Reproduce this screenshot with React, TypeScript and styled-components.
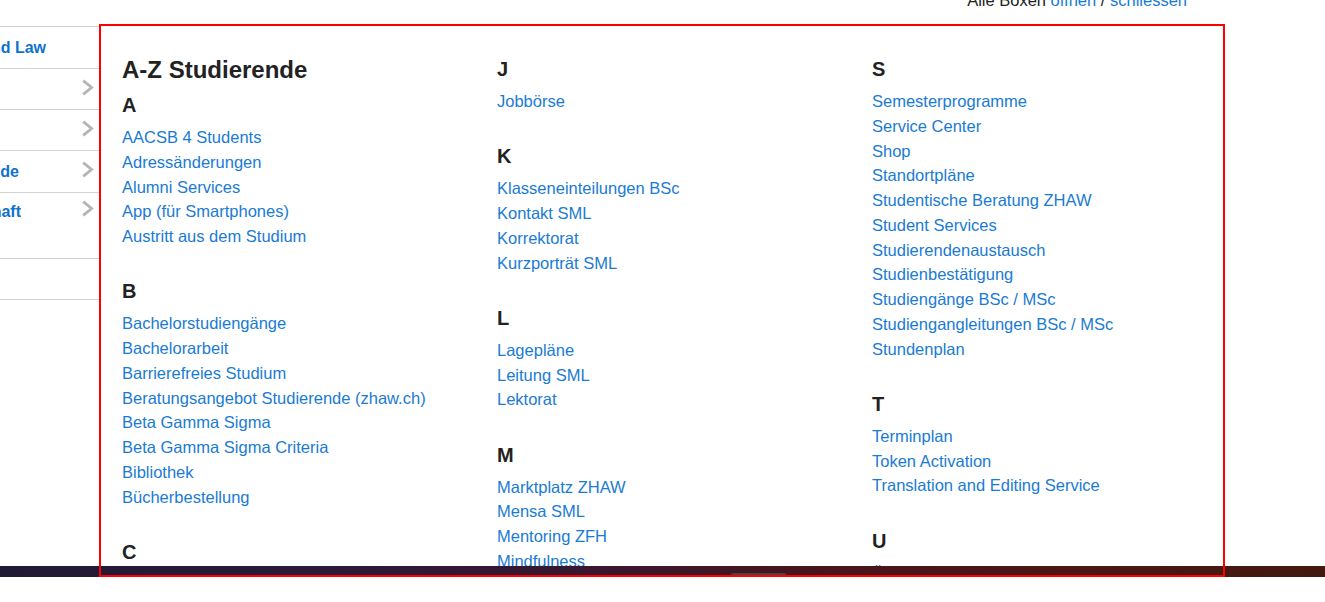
import React from "react";
import styled, { createGlobalStyle } from "styled-components";

const GlobalStyle = createGlobalStyle`
  html, body { margin: 0; padding: 0; background: #ffffff; }
  body { font-family: "Liberation Sans", Arial, sans-serif; overflow: hidden; }
  * { box-sizing: border-box; }
`;

const LINK = "#1a7bd4";
const INK = "#222222";
const RULE = "#d3d3d3";

const Root = styled.div`
  position: relative;
  width: 1325px;
  height: 602px;
  overflow: hidden;
  background: #ffffff;
`;

const Viewport = styled.div`
  height: 566px;
  overflow: hidden;
`;

const TopBar = styled.div`
  margin-top: -12px;
  height: 38px;
  display: flex;
  justify-content: flex-end;
  padding-right: 138px;
  font-size: 16.5px;
  line-height: 24.8px;
  color: ${INK};
  white-space: pre;
`;

const TopLink = styled.a`
  color: ${LINK};
  text-decoration: none;
`;

const Main = styled.div`
  display: flex;
  align-items: flex-start;
`;

const Sidebar = styled.nav`
  width: 100px;
  flex: none;
  border-top: 1px solid ${RULE};
  overflow: hidden;
`;

const SideItem = styled.div<{ $h: number; $tall?: boolean }>`
  height: ${(p) => p.$h}px;
  border-bottom: 1px solid ${RULE};
  display: flex;
  align-items: ${(p) => (p.$tall ? "flex-start" : "center")};
  padding-top: ${(p) => (p.$tall ? 9 : 0)}px;
  padding-right: 6px;
`;

const SideLabel = styled.span<{ $end: number }>`
  width: ${(p) => p.$end}px;
  display: flex;
  justify-content: flex-end;
  overflow: hidden;
  white-space: nowrap;
  font-size: 16px;
  line-height: 20px;
  font-weight: 700;
  color: #0f72cc;
`;

const Chevron = styled.svg<{ $tall?: boolean }>`
  margin-left: auto;
  margin-top: ${(p) => (p.$tall ? -2 : 0)}px;
  margin-bottom: ${(p) => (p.$tall ? 0 : 4)}px;
  flex: none;
  display: block;
`;

const Content = styled.section`
  flex: 1;
  padding: 31px 0 0 22px;
  display: grid;
  grid-template-columns: repeat(3, 375px);
  align-items: start;
`;

const Column = styled.div<{ $offset?: number }>`
  padding-top: ${(p) => p.$offset ?? 0}px;
`;

const Title = styled.h2`
  margin: 0 0 11px;
  font-size: 24px;
  line-height: 26px;
  font-weight: 700;
  color: ${INK};
  white-space: nowrap;
`;

const Group = styled.div`
  & + & {
    margin-top: 31.5px;
  }
`;

const Letter = styled.h3`
  margin: 0 0 9px;
  font-size: 20px;
  line-height: 22px;
  font-weight: 700;
  color: ${INK};
`;

const LinkList = styled.ul`
  list-style: none;
  margin: 0;
  padding: 0;
`;

const Item = styled.li`
  font-size: 16.5px;
  line-height: 24.75px;
`;

const ItemLink = styled.a`
  color: ${LINK};
  text-decoration: none;
  white-space: nowrap;
`;

const Band = styled.div`
  height: 11px;
  background: linear-gradient(
    90deg,
    #211a35 0%,
    #2a1a3a 25%,
    #39172f 45%,
    #47151c 62%,
    #4a1716 80%,
    #42190f 100%
  );
  display: flex;
  align-items: flex-end;
  padding-left: 730px;
`;

const BandTab = styled.div`
  width: 57px;
  height: 4px;
  border-radius: 4px 4px 0 0;
  background: #4b4248;
`;

const Highlight = styled.div`
  position: absolute;
  left: 99px;
  top: 24px;
  width: 1126px;
  height: 553px;
  border: 2px solid #ff0000;
  pointer-events: none;
`;

type Section = { letter: string; items: string[] };

const col1: Section[] = [
  {
    letter: "A",
    items: [
      "AACSB 4 Students",
      "Adressänderungen",
      "Alumni Services",
      "App (für Smartphones)",
      "Austritt aus dem Studium",
    ],
  },
  {
    letter: "B",
    items: [
      "Bachelorstudiengänge",
      "Bachelorarbeit",
      "Barrierefreies Studium",
      "Beratungsangebot Studierende (zhaw.ch)",
      "Beta Gamma Sigma",
      "Beta Gamma Sigma Criteria",
      "Bibliothek",
      "Bücherbestellung",
    ],
  },
  { letter: "C", items: ["Career Services", "Coaching"] },
];

const col2: Section[] = [
  { letter: "J", items: ["Jobbörse"] },
  {
    letter: "K",
    items: ["Klasseneinteilungen BSc", "Kontakt SML", "Korrektorat", "Kurzporträt SML"],
  },
  { letter: "L", items: ["Lagepläne", "Leitung SML", "Lektorat"] },
  {
    letter: "M",
    items: ["Marktplatz ZHAW", "Mensa SML", "Mentoring ZFH", "Mindfulness", "Moodle"],
  },
];

const col3: Section[] = [
  {
    letter: "S",
    items: [
      "Semesterprogramme",
      "Service Center",
      "Shop",
      "Standortpläne",
      "Studentische Beratung ZHAW",
      "Student Services",
      "Studierendenaustausch",
      "Studienbestätigung",
      "Studiengänge BSc / MSc",
      "Studiengangleitungen BSc / MSc",
      "Stundenplan",
    ],
  },
  {
    letter: "T",
    items: ["Terminplan", "Token Activation", "Translation and Editing Service"],
  },
  { letter: "U", items: ["Überfachliche Kompetenzen"] },
];

const side = [
  { h: 42, label: "School of Management and Law", end: 46, chevron: false },
  { h: 41, label: "", end: 0, chevron: true },
  { h: 41, label: "", end: 0, chevron: true },
  { h: 42, label: "Für Studierende", end: 19, chevron: true },
  { h: 66, label: "Wirtschaft", end: 21, chevron: true, tall: true },
  { h: 41, label: "", end: 0, chevron: false },
];

const ChevronIcon = ({ tall }: { tall?: boolean }) => (
  <Chevron $tall={tall} width="13" height="17" viewBox="0 0 13 17" aria-hidden="true">
    <polyline
      points="2.2,1.6 10.6,8.5 2.2,15.4"
      fill="none"
      stroke="#b5b5b5"
      strokeWidth="2.8"
    />
  </Chevron>
);

const Groups = ({ sections }: { sections: Section[] }) => (
  <>
    {sections.map((s) => (
      <Group key={s.letter}>
        <Letter>{s.letter}</Letter>
        <LinkList>
          {s.items.map((it) => (
            <Item key={it}>
              <ItemLink href="#">{it}</ItemLink>
            </Item>
          ))}
        </LinkList>
      </Group>
    ))}
  </>
);

export default function App() {
  return (
    <Root>
      <GlobalStyle />
      <Viewport>
        <TopBar>
          <span>Alle Boxen </span>
          <TopLink href="#">öffnen</TopLink>
          <span> / </span>
          <TopLink href="#">schliessen</TopLink>
        </TopBar>
        <Main>
          <Sidebar>
            {side.map((s, i) => (
              <SideItem key={i} $h={s.h} $tall={s.tall}>
                <SideLabel $end={s.end}>{s.label}</SideLabel>
                {s.chevron && <ChevronIcon tall={s.tall} />}
              </SideItem>
            ))}
          </Sidebar>
          <Content>
            <Column>
              <Title>A-Z Studierende</Title>
              <Groups sections={col1} />
            </Column>
            <Column $offset={1}>
              <Groups sections={col2} />
            </Column>
            <Column $offset={1}>
              <Groups sections={col3} />
            </Column>
          </Content>
        </Main>
      </Viewport>
      <Band>
        <BandTab />
      </Band>
      <Highlight />
    </Root>
  );
}
